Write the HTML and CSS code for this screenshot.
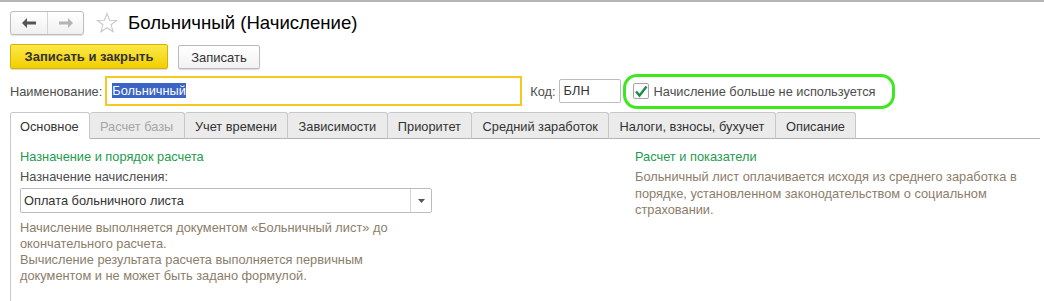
FILE: index.html
```html
<!DOCTYPE html>
<html lang="ru">
<head>
    <meta charset="UTF-8">
    <title>Больничный (Начисление)</title>
    <link rel="stylesheet" href="styles.css">
</head>
<body>
<div class="window">
    <div class="title-bar">
        <div class="nav-buttons">
            <button class="nav-btn">
                <svg width="14" height="10" viewBox="0 0 14 10"><path d="M0 5 L5 0 L5 3.5 L14 3.5 L14 6.5 L5 6.5 L5 10 Z" fill="#555"/></svg>
            </button>
            <button class="nav-btn">
                <svg width="14" height="10" viewBox="0 0 14 10"><path d="M14 5 L9 0 L9 3.5 L0 3.5 L0 6.5 L9 6.5 L9 10 Z" fill="#b4b4b4"/></svg>
            </button>
        </div>
        <svg class="star" width="22" height="22" viewBox="0 0 22 22"><path d="M11 1.5 L13.6 8.2 L20.7 8.4 L15.1 12.8 L17.1 19.8 L11 15.7 L4.9 19.8 L6.9 12.8 L1.3 8.4 L8.4 8.2 Z" fill="none" stroke="#c8c8c8" stroke-width="1.1"/></svg>
        <h1>Больничный (Начисление)</h1>
    </div>

    <div class="command-bar">
        <button class="btn btn-primary">Записать и закрыть</button>
        <button class="btn">Записать</button>
    </div>

    <div class="field-row">
        <label class="field-label">Наименование:</label>
        <div class="input input-name"><span class="selected">Больничный</span></div>
        <label class="field-label code-label">Код:</label>
        <div class="input input-code">БЛН</div>
        <div class="highlight">
            <span class="checkbox">
                <svg width="14" height="13" viewBox="0 0 14 13"><path d="M2 6.5 L5.5 10.5 L12.5 1.5" fill="none" stroke="#1f8a4c" stroke-width="2.4"/></svg>
            </span>
            <span>Начисление больше не используется</span>
        </div>
    </div>

    <div class="tabs">
        <div class="tab active">Основное</div>
        <div class="tab disabled">Расчет базы</div>
        <div class="tab">Учет времени</div>
        <div class="tab">Зависимости</div>
        <div class="tab">Приоритет</div>
        <div class="tab">Средний заработок</div>
        <div class="tab">Налоги, взносы, бухучет</div>
        <div class="tab">Описание</div>
        <div class="tab-filler"></div>
    </div>

    <div class="tab-page">
        <div class="column column-left">
            <div class="group-title">Назначение и порядок расчета</div>
            <div class="caption">Назначение начисления:</div>
            <div class="select">
                <span class="select-value">Оплата больничного листа</span>
                <span class="select-arrow">
                    <svg width="7" height="4" viewBox="0 0 7 4"><path d="M0 0 L7 0 L3.5 4 Z" fill="#555"/></svg>
                </span>
            </div>
            <div class="note">
                Начисление выполняется документом «Больничный лист» до окончательного расчета.<br>
                Вычисление результата расчета выполняется первичным документом и не может быть задано формулой.
            </div>
        </div>
        <div class="column column-right">
            <div class="group-title">Расчет и показатели</div>
            <div class="note">
                Больничный лист оплачивается исходя из среднего заработка в порядке, установленном законодательством о социальном страховании.
            </div>
        </div>
    </div>
</div>
</body>
</html>
```

FILE: styles.css
```css
* {
    box-sizing: border-box;
    margin: 0;
    padding: 0;
}

body {
    font-family: 'Liberation Sans', Arial, sans-serif;
    font-size: 12.8px;
    color: #333;
    background: #fff;
}

.window {
    border-top: 2px solid #b4b4b4;
    height: 301px;
    overflow: hidden;
    display: flex;
    flex-direction: column;
}

/* заголовок */
.title-bar {
    display: flex;
    align-items: center;
    padding: 8px 10px 0;
    height: 33px;
}

.nav-buttons {
    display: flex;
    border: 1px solid #bdbdbd;
    border-radius: 3px;
    background: linear-gradient(#fff, #f0f0f0);
    box-shadow: 0 1px 1px rgba(0, 0, 0, 0.12);
}

.nav-btn {
    width: 36px;
    height: 22px;
    border: none;
    background: transparent;
    display: flex;
    align-items: center;
    justify-content: center;
}

.nav-btn + .nav-btn {
    border-left: 1px solid #d4d4d4;
}

.star {
    margin-left: 12px;
}

h1 {
    font-size: 18.6px;
    font-weight: normal;
    color: #000;
    margin-left: 10px;
}

/* кнопки */
.command-bar {
    display: flex;
    gap: 10px;
    padding: 9px 10px 0;
}

.btn {
    font-family: inherit;
    font-size: 13px;
    height: 25px;
    padding: 0 12px;
    border: 1px solid #bbb;
    border-radius: 2px;
    background: linear-gradient(#fff, #f2f2f2);
    color: #333;
    box-shadow: 0 1px 1px rgba(0, 0, 0, 0.15);
}

.btn-primary {
    width: 158px;
    font-weight: bold;
    color: #333;
    border-color: #d6b300;
    background: linear-gradient(#fbe84a, #f3cf00);
}

.command-bar .btn:not(.btn-primary) {
    width: 82px;
    height: 24px;
    margin-top: 1px;
}

/* строка полей */
.field-row {
    display: flex;
    align-items: center;
    padding: 5px 10px 0;
    height: 39px;
}

.field-label {
    color: #4d4d4d;
    margin-right: 3px;
}

.input {
    height: 24px;
    border: 1px solid #bcbcbc;
    border-radius: 2px;
    padding: 3px 2px;
    color: #333;
    line-height: 16px;
}

.input-name {
    width: 417px;
    height: 30px;
    border: 2px solid #f6c820;
    border-radius: 0;
    padding: 5px 5px;
    margin-right: 8px;
}

.selected {
    background: #3b64c4;
    color: #fff;
}

.input-code {
    width: 62px;
    padding-left: 4px;
}

.highlight {
    display: flex;
    align-items: center;
    gap: 5px;
    margin-left: 2px;
    width: 272px;
    height: 35px;
    border: 3px solid #3ee81e;
    border-radius: 14px;
    padding-left: 7px;
    color: #4d4d4d;
}

.checkbox {
    width: 16px;
    height: 16px;
    border: 1px solid #a5a5a5;
    border-radius: 2px;
    background: #fff;
    display: flex;
    align-items: center;
    justify-content: center;
}

/* вкладки */
.tabs {
    display: flex;
    margin: 4px 4px 0 10px;
    height: 27px;
}

.tab {
    padding: 6px 10.3px 0;
    border: 1px solid #c8c8c8;
    border-left: none;
    border-radius: 3px 3px 0 0;
    background: #ebebeb;
    color: #333;
    border-bottom-color: #b4b4b4;
}

.tab.active {
    background: #fff;
    border-left: 1px solid #c8c8c8;
    border-bottom-color: #fff;
    padding: 6px 10px 0 9px;
}

.tab.disabled {
    color: #a6a6a6;
}

.tab-filler {
    flex: 1;
    border-bottom: 1px solid #b4b4b4;
}

/* страница */
.tab-page {
    flex: 1;
    display: flex;
    margin-left: 10px;
    border-left: 1px solid #c8c8c8;
    padding: 10px 0 0 9px;
}

.column-left {
    width: 412px;
}

.column-right {
    margin-left: 203px;
    width: 400px;
}

.group-title {
    color: #1f9a4e;
    line-height: 16px;
    margin-bottom: 4px;
}

.caption {
    color: #4d4d4d;
    line-height: 16px;
    margin-bottom: 3px;
}

.select {
    display: flex;
    align-items: center;
    height: 25px;
    border: 1px solid #bcbcbc;
    border-radius: 2px;
}

.select-value {
    flex: 1;
    padding-left: 3px;
    color: #333;
}

.select-arrow {
    width: 21px;
    height: 100%;
    border-left: 1px solid #d4d4d4;
    display: flex;
    align-items: center;
    justify-content: center;
}

.note {
    color: #8c7d6a;
    line-height: 16px;
    margin-top: 7px;
}

.column-right .note {
    margin-top: 0;
    width: 395px;
    line-height: 16.5px;
}
```
